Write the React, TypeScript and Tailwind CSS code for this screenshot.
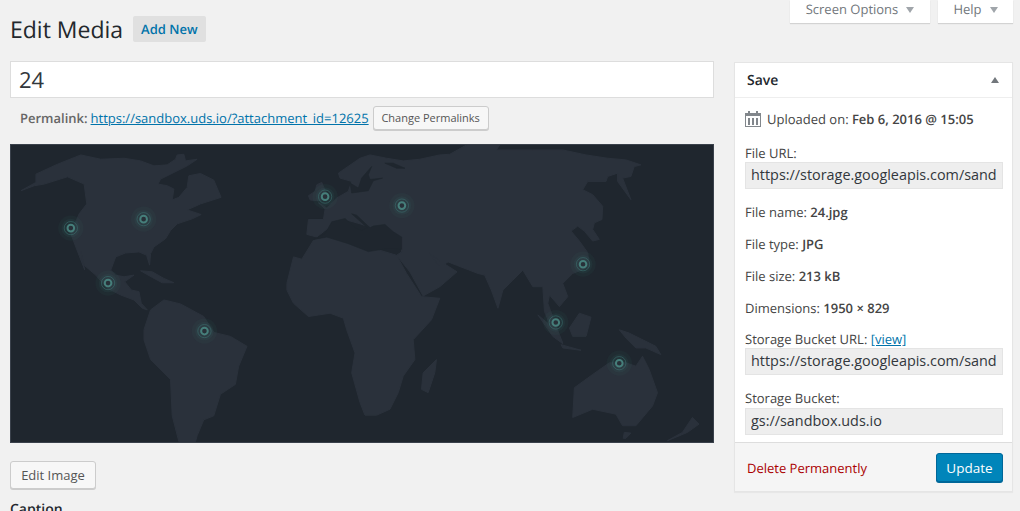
const land = [
  "M60 150L105 125L105 100L170 70L240 42L300 55L370 52L420 60L460 75L500 72L525 55L530 42L550 40L555 60L590 55L560 75L520 95L480 115L472 130L500 135L520 145L515 178L535 170L560 140L565 105L600 98L640 118L662 170L600 190L560 208L602 222L575 235L530 250L510 270L495 295L460 320L450 340L447 375L438 345L415 335L375 338L345 350L330 390L345 405L370 410L400 405L372 425L392 450L415 455L422 490L440 510L425 505L400 480L360 465L320 445L285 405L250 375L240 335L252 390L225 320L210 280L235 220L258 190L250 130L200 108L130 130L100 135Z",
  "M430 570L450 510L490 480L540 492L610 530L640 578L690 590L740 620L715 680L705 735L660 765L640 830L610 842L590 890L585 908L535 908L515 830L510 720L450 660L430 600Z",
  "M860 430L880 350L905 357L940 300L1010 285L1050 310L1140 330L1190 345L1220 400L1265 470L1320 475L1295 540L1240 600L1245 660L1210 710L1195 760L1170 810L1130 828L1095 828L1080 790L1055 700L1065 640L1040 570L1030 535L990 520L925 530L880 490L860 450Z",
  "M920 282L925 237L970 237L975 205L955 187L980 202L1010 172L1045 152L1055 122L1020 112L1015 97L1080 52L1110 42L1160 52L1210 60L1260 55L1320 42L1350 40L1400 12L1500 12L1490 27L1600 27L1690 27L1760 42L1825 52L1880 57L1925 72L1905 77L1895 107L1870 112L1895 177L1855 122L1855 97L1825 107L1820 122L1765 122L1750 147L1780 162L1810 197L1808 237L1785 247L1780 267L1800 297L1780 302L1755 272L1735 257L1715 272L1740 302L1765 337L1768 362L1770 380L1720 400L1690 430L1705 470L1680 500L1650 465L1645 490L1670 560L1690 610L1660 575L1635 515L1630 440L1600 440L1570 390L1540 420L1510 450L1495 505L1475 450L1455 405L1435 400L1370 375L1345 365L1320 380L1290 340L1320 362L1372 395L1320 440L1270 468L1230 395L1190 345L1205 335L1205 290L1150 285L1110 260L1080 250L1045 240L1000 250L950 290Z",
  "M925 165L945 152L950 132L965 125L975 150L985 175L950 180L930 178Z",
  "M420 392L455 395L490 415L520 428L485 428L455 412Z",
  "M1725 745L1780 705L1830 670L1880 670L1910 680L1930 650L1950 690L1975 760L1960 800L1910 860L1870 860L1850 825L1780 810L1720 835Z",
  "M1740 520L1775 532L1760 590L1720 590L1710 565Z",
  "M1615 525L1650 555L1685 600L1690 612L1660 590Z",
  "M1685 615L1745 632L1690 625Z",
  "M1860 570L1890 580L1970 620L1985 645L1940 625L1910 625L1880 595Z",
  "M1310 660L1305 700L1285 760L1265 750L1270 700Z",
  "M1875 880L1895 882L1880 898L1872 898Z",
  "M2080 835L2100 855L2065 880L2005 905L2050 880Z",
];
const seas = [
  "M940 297L975 280L995 244L1035 234L1065 262L1085 270L1102 262L1055 220L1070 224L1110 262L1120 257L1155 252L1180 274L1205 290L1205 327L1165 324L1105 334L1045 310L980 290Z",
  "M1115 77L1085 112L1075 142L1050 127L1055 157L1105 150L1120 120L1148 112L1110 116L1105 102Z",
  "M1155 67L1190 82L1215 82L1180 67Z",
];
const pins: [number, number][] = [[210,263],[429,236],[322,429],[612,574],[975,168],[1206,195],[1751,372],[1669,548],[1860,671]];

function WorldMap() {
  return (
    <svg viewBox="30 12 2112 897" className="block w-[704px] h-[299px] border border-[#3a414b] bg-[#1f262e] shrink-0" preserveAspectRatio="none">
      {land.map((d) => <path key={d} d={d} fill="#2a313b" stroke="#2a313b" strokeWidth="3" strokeLinejoin="round" />)}
      {seas.map((d) => <path key={d} d={d} fill="#1f262e" stroke="#1f262e" strokeWidth="2" strokeLinejoin="round" />)}
      {pins.map(([x, y]) => (
        <g key={x}>
          <circle cx={x} cy={y} r="38" fill="#3f7a78" opacity="0.07" />
          <circle cx={x} cy={y} r="28" fill="#3f7a78" opacity="0.1" />
          <circle cx={x} cy={y} r="20" fill="none" stroke="#3f7a78" strokeWidth="2.5" opacity="0.6" />
          <circle cx={x} cy={y} r="10" fill="#283038" stroke="#467f7b" strokeWidth="6" />
        </g>
      ))}
    </svg>
  );
}

function ReadonlyField({ value }: { value: string }) {
  return (
    <input
      readOnly
      value={value}
      className="block w-[258px] h-[27px] bg-[#eeeeee] border border-[#e4e4e4] px-[5px] pb-[2px] text-[14.4px] text-[#32373c] outline-none"
    />
  );
}

function Info({ label, value }: { label: string; value: string }) {
  return (
    <div className="h-[32px] leading-[32px]">
      {label} <b className="font-semibold">{value}</b>
    </div>
  );
}

export default function App() {
  return (
    <div className="h-[511px] overflow-hidden bg-[#f1f1f1] text-[13px] text-[#444] flex gap-[20px] pl-[10px] font-['Open_Sans',sans-serif] [text-rendering:geometricPrecision]">
      <div className="w-[704px] shrink-0">
        <div className="h-[61px] flex items-center gap-[10px] pb-[3px]">
          <h1 className="text-[23px] text-[#23282d] leading-none">Edit Media</h1>
          <a className="h-[26px] px-[8px] pt-[2px] flex items-center rounded-[2px] bg-[#e0e0e0] text-[#0073aa] text-[13px] font-semibold">Add New</a>
        </div>
        <div className="h-[37px] bg-white border border-[#dddddd] flex items-center pl-[8px] pt-[1px] text-[22px] text-[#32373c]">24</div>
        <div className="h-[46px] flex items-center pl-[10px] pb-[6px] text-[13px] text-[#666]">
          <b className="font-semibold pt-[2px]">Permalink:</b>
          <a className="ml-[3px] pt-[2px] text-[#0073aa] underline">https://sandbox.uds.io/?attachment_id=12625</a>
          <button className="ml-[4px] h-[24px] w-[116px] bg-[#f7f7f7] border border-[#cccccc] rounded-[3px] shadow-[0_1px_0_#cccccc] text-[11px] text-[#555]">Change Permalinks</button>
        </div>
        <WorldMap />
        <button className="mt-[18px] pt-[2px] h-[28px] w-[86px] block bg-[#f7f7f7] border border-[#cccccc] rounded-[3px] shadow-[0_1px_0_#cccccc] text-[13px] text-[#555]">Edit Image</button>
        <div className="mt-[10px] font-semibold text-[14px] text-[#23282d]">Caption</div>
      </div>

      <div className="w-[279px] shrink-0">
        <div className="flex justify-end gap-[8px] h-[23px] text-[13px] text-[#72777c]">
          <div className="w-[140px] bg-white shadow-[0_1px_1px_rgba(0,0,0,0.12)] flex items-center justify-center gap-[8px] pb-[3px]">
            Screen Options <span className="w-0 h-0 border-x-[4px] border-x-transparent border-t-[6px] border-t-[#a0a5aa]" />
          </div>
          <div className="w-[75px] bg-white shadow-[0_1px_1px_rgba(0,0,0,0.12)] flex items-center justify-center gap-[8px] pb-[3px]">
            Help <span className="w-0 h-0 border-x-[4px] border-x-transparent border-t-[6px] border-t-[#a0a5aa]" />
          </div>
        </div>

        <div className="mt-[39px] h-[430px] bg-white border border-[#e5e5e5] shadow-[0_1px_1px_rgba(0,0,0,0.04)] flex flex-col">
          <div className="h-[35px] shrink-0 border-b border-[#eeeeee] flex items-center justify-between pl-[12px] pr-[13px]">
            <span className="font-semibold text-[14px] text-[#23282d]">Save</span>
            <span className="w-0 h-0 border-x-[4px] border-x-transparent border-b-[6px] border-b-[#72777c]" />
          </div>
          <div className="flex-1 px-[10px]">
            <div className="h-[40px] flex items-center gap-[6px]">
              <svg width="16" height="17" viewBox="0 0 16 17" className="shrink-0">
                <path fill="#82878c" d="M0 3h3V1h2v2h6V1h2v2h3v14H0zM1 6v10h14V6z" />
                <path fill="#82878c" d="M3 8h2v7H3zM7 8h2v7H7zM11 8h2v7h-2z" />
              </svg>
              <span className="pt-[4px]">Uploaded on: <b className="font-semibold">Feb 6, 2016 @ 15:05</b></span>
            </div>
            <div className="mt-[6px] leading-[18px]">File URL:</div>
            <ReadonlyField value="https://storage.googleapis.com/sandbox.uds.io/2016/02/24.jpg" />
            <div className="mt-[7px]">
              <Info label="File name:" value="24.jpg" />
              <Info label="File type:" value="JPG" />
              <Info label="File size:" value="213 kB" />
              <Info label="Dimensions:" value="1950 × 829" />
            </div>
            <div className="mt-[7px] leading-[17px]">
              Storage Bucket URL: <a className="text-[#0073aa] underline">[view]</a>
            </div>
            <ReadonlyField value="https://storage.googleapis.com/sandbox.uds.io/2016/02/24.jpg" />
            <div className="mt-[13px] leading-[20px]">Storage Bucket:</div>
            <ReadonlyField value="gs://sandbox.uds.io" />
          </div>
          <div className="h-[49px] shrink-0 bg-[#f5f5f5] border-t border-[#dddddd] flex items-center justify-between pl-[12px] pr-[9px]">
            <a className="text-[#a00] text-[13px] pt-[4px]">Delete Permanently</a>
            <button className="h-[29px] w-[67px] pt-[2px] bg-[#0085ba] border border-[#006799] rounded-[3px] shadow-[0_1px_0_#006799] text-white text-[13.5px]">Update</button>
          </div>
        </div>
      </div>
    </div>
  );
}
